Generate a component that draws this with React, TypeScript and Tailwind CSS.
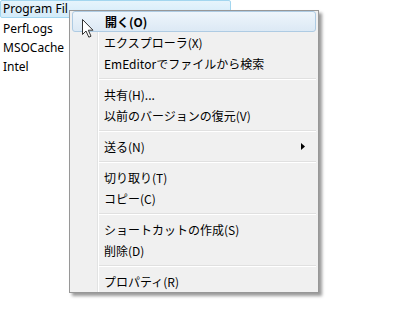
import React from "react";

type Item = { label: string; bold?: boolean; sub?: boolean; hot?: boolean } | "sep";

const items: Item[] = [
  { label: "開く(O)", bold: true, hot: true },
  { label: "エクスプローラ(X)" },
  { label: "EmEditorでファイルから検索" },
  "sep",
  { label: "共有(H)..." },
  { label: "以前のバージョンの復元(V)" },
  "sep",
  { label: "送る(N)", sub: true },
  "sep",
  { label: "切り取り(T)" },
  { label: "コピー(C)" },
  "sep",
  { label: "ショートカットの作成(S)" },
  { label: "削除(D)" },
  "sep",
  { label: "プロパティ(R)" },
];

const folders = ["Program Fil", "PerfLogs", "MSOCache", "Intel"];

export default function App() {
  return (
    <div className="relative w-[420px] h-[312px] bg-white overflow-hidden text-black">
      {/* folder list */}
      <div className="flex flex-col text-[12px] leading-[19px] font-['Noto_Sans',sans-serif]">
        {folders.map((f, i) =>
          i === 0 ? (
            <div
              key={f}
              className="w-[231px] h-[18px] mb-[1px] border border-[#a3d6ef] rounded-[2px] bg-gradient-to-b from-[#e6f4fc] to-[#d3ebf9] pl-[2px] leading-[16px] whitespace-nowrap overflow-hidden"
            >
              {f}
            </div>
          ) : (
            <div key={f} className="h-[19px] pl-[3px] whitespace-nowrap">
              {f}
            </div>
          )
        )}
      </div>

      {/* context menu */}
      <div className="absolute left-[69px] top-[10px] w-[250px] border border-[#979797] bg-[#f0f0f0] shadow-[3px_3px_3px_rgba(0,0,0,0.4)] px-[2px] font-['Noto_Sans_CJK_JP',sans-serif] text-[12px]">
        <div className="absolute left-[27px] top-0 bottom-0 w-px bg-[#e2e3e3]" />
        <div className="absolute left-[28px] top-0 bottom-0 w-px bg-white" />
        <div className="relative flex flex-col">
          {items.map((it, i) =>
            it === "sep" ? (
              <div key={i} className="h-[10px] flex flex-col justify-center pl-[27px]">
                <div className="h-px bg-[#e0e0e0]" />
                <div className="h-px bg-white" />
              </div>
            ) : (
              <div
                key={i}
                className={
                  "relative h-[21px] flex items-center pl-[32px] pr-[11px] whitespace-nowrap " +
                  (it.hot
                    ? "rounded-[3px] border border-[#aecbe3] bg-gradient-to-b from-[#eef5fb] to-[#dce9f5] pl-[31px]"
                    : "")
                }
              >
                <span className={"flex-1 leading-[21px] " + (it.bold ? "font-bold" : "")}>{it.label}</span>
                {it.sub && (
                  <svg width="4" height="7" viewBox="0 0 4 7">
                    <path d="M0 0 L4 3.5 L0 7 Z" fill="#000" />
                  </svg>
                )}
              </div>
            )
          )}
        </div>
      </div>

      {/* mouse cursor */}
      <svg
        className="absolute left-[81px] top-[18px]"
        width="14"
        height="21"
        viewBox="0 0 14 21"
      >
        <path
          d="M1.5 1.5 L1.5 16.5 L5 13 L7.8 19.2 L10 18.2 L7.3 12.2 L12 12.2 Z"
          fill="#fff"
          stroke="#333"
          strokeWidth="1"
          strokeLinejoin="round"
        />
      </svg>
    </div>
  );
}
